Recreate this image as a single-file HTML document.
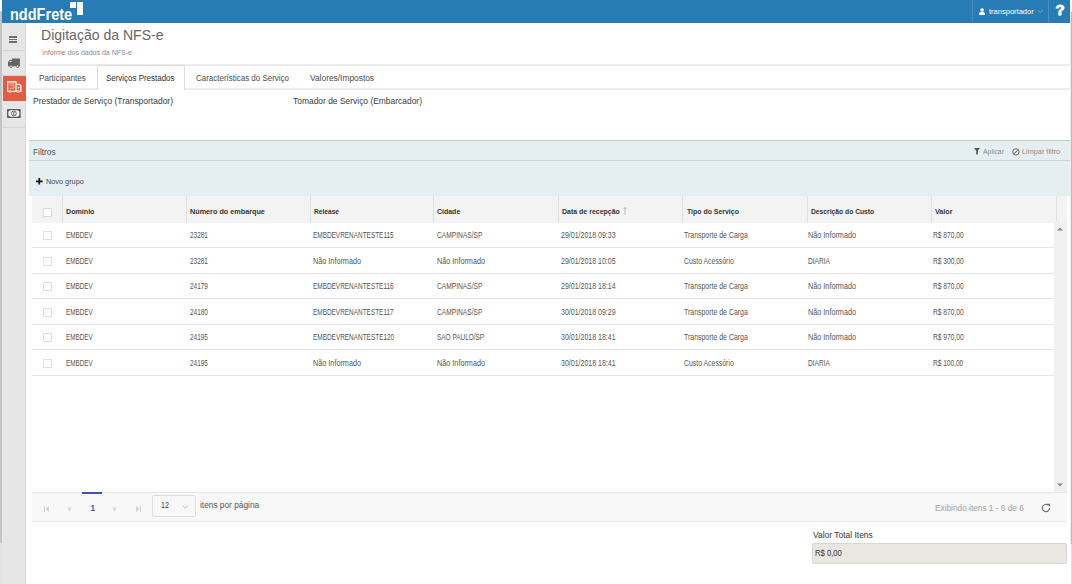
<!DOCTYPE html>
<html><head><meta charset="utf-8">
<style>
*{box-sizing:border-box;margin:0;padding:0}
html,body{width:1072px;height:584px;overflow:hidden;background:#fff;font-family:"Liberation Sans",sans-serif;color:#333}
.a{position:absolute}
.t{position:absolute;white-space:nowrap;line-height:1;transform-origin:0 0}
.sep{position:absolute;left:0;width:23px;height:1px;background:#d4d4d4}
</style></head><body>
<div class="a" style="left:0;top:0;width:2px;height:543px;background:#c4c4c4"></div>
<div class="a" style="left:0;top:543px;width:2px;height:41px;background:#e4e4e4"></div>
<div class="a" style="left:0;top:0;width:2px;height:11px;background:#fff"></div>
<div class="a" style="left:1071px;top:12px;width:1px;height:532px;background:#bdbdbd"></div>
<div class="a" style="left:1070px;top:12px;width:1px;height:532px;background:#ececec"></div>
<div class="a" style="left:1071px;top:544px;width:1px;height:40px;background:#e0e0e0"></div>
<div class="a" style="left:2px;top:0;width:1068px;height:23px;background:#287cb5"></div>
<div class="t" style="left:9.99px;top:7px;font-size:16px;color:#fff;font-weight:700;transform:scaleX(0.9075)">nddFrete</div>
<div class="a" style="left:70px;top:2px;width:6px;height:6px;background:#fff"></div>
<div class="a" style="left:76.5px;top:2px;width:6px;height:6px;background:#fff"></div>
<div class="a" style="left:76.5px;top:8.3px;width:6px;height:6.6px;background:#fff;border-top:0.6px solid #e3edf5"></div>
<div class="a" style="left:972px;top:0;width:1px;height:23px;background:#4a8fc2"></div>
<div class="a" style="left:1048px;top:0;width:1px;height:23px;background:#4a8fc2"></div>
<svg class="a" style="left:978.8px;top:8px" width="6.2" height="7" viewBox="0 0 6.2 7"><circle cx="3.1" cy="2" r="1.8" fill="#fff"/><path d="M0.2 7 V5.4 Q0.2 3.7 3.1 3.7 Q6 3.7 6 5.4 V7Z" fill="#fff"/></svg>
<div class="t" style="left:988.70px;top:8px;font-size:8.0px;color:#fff;transform:scaleX(0.9391)">transportador</div>
<svg class="a" style="left:1038px;top:10px" width="5" height="3" viewBox="0 0 5 3"><path d="M0.3 0.3 L2.5 2.5 L4.7 0.3" stroke="#9cc2de" stroke-width="0.7" fill="none"/></svg>
<div class="t" style="left:1055.50px;top:2px;font-size:15px;color:#fff;font-weight:700;-webkit-text-stroke:0.9px #fff">?</div>
<div class="a" style="left:2px;top:23px;width:24px;height:561px;background:#e6e6e6;border-right:1px solid #d9d9d9">
  <div class="a" style="left:7px;top:13px;width:8px;height:1.5px;background:#707070"></div>
  <div class="a" style="left:7px;top:15.8px;width:8px;height:1.3px;background:#707070"></div>
  <div class="a" style="left:7px;top:18.4px;width:8px;height:1.5px;background:#707070"></div>
  <div class="sep" style="top:27px"></div>
  <svg class="a" style="left:6px;top:35px" width="12" height="10" viewBox="0 0 12 10"><path d="M4 0.4 H11.9 V8.2 H0 V4 L2 1.8 H4Z" fill="#646464"/><path d="M1 4.1 L2.3 2.7 H3.6 V4.1Z" fill="#dfe6f0"/><circle cx="3" cy="8.3" r="1.2" fill="#e8eef5" stroke="#646464" stroke-width="0.9"/><circle cx="9.6" cy="8.3" r="1.2" fill="#e8eef5" stroke="#646464" stroke-width="0.9"/></svg>
  <div class="sep" style="top:52px"></div>
  <div class="a" style="left:1px;top:53px;width:23px;height:25px;background:#e35c40"></div>
  <svg class="a" style="left:5px;top:57.5px" width="15" height="12" viewBox="0 0 15 12"><path d="M0.7 0.8 H9 V10.4 H0.7Z" stroke="#fff" stroke-width="1.2" fill="none"/><path d="M9 3.3 H11.6 Q13.9 3.3 13.9 6 V10.4 H9" stroke="#fff" stroke-width="1.2" fill="none"/><path d="M2.6 4.2 H7 M2.6 7.2 H7 M7 4.2 V7.2" stroke="#f5d0c6" stroke-width="0.8" fill="none"/><path d="M2.4 2.6 H7" stroke="#f7c9bd" stroke-width="0.8"/><circle cx="11.6" cy="6.6" r="0.9" fill="#fff"/><circle cx="3.2" cy="10.6" r="1.1" fill="#e35c40" stroke="#fff" stroke-width="0.8"/><circle cx="11" cy="10.6" r="1.1" fill="#e35c40" stroke="#fff" stroke-width="0.8"/></svg>
  <svg class="a" style="left:5.3px;top:85.7px" width="14" height="9" viewBox="0 0 14 9"><rect x="0" y="0" width="13.7" height="9" rx="0.8" fill="#5e5e5e"/><rect x="1.3" y="1.3" width="11.1" height="6.4" rx="2.6" fill="#f2f4f6"/><circle cx="6.85" cy="4.5" r="2.4" fill="none" stroke="#555" stroke-width="0.9"/><path d="M6.85 3 V6" stroke="#555" stroke-width="0.9"/></svg>
  <div class="sep" style="top:104px"></div>
</div>
<div class="t" style="left:41.01px;top:28px;font-size:14.2px;color:#666;transform:scaleX(0.9893)">Digitação da NFS-e</div>
<div class="t" style="left:42.00px;top:49px;font-size:7.0px;color:#8a8a8a">Informe dos dados da NFS-e</div>
<div class="a" style="left:29px;top:64px;width:1041px;height:2px;background:#ececec"></div>
<div class="a" style="left:29px;top:88px;width:1041px;height:2px;background:#ececec"></div>
<div class="a" style="left:97px;top:65px;width:88px;height:25px;background:#fff;border:1px solid #dcdcdc;border-bottom:none;border-radius:2px 2px 0 0"></div>
<div class="t" style="left:39.30px;top:74px;font-size:8.3px;color:#4a4a4a;transform:scaleX(0.9767)">Participantes</div>
<div class="t" style="left:106.40px;top:74px;font-size:8.3px;color:#2e2e2e;transform:scaleX(0.9576)">Serviços Prestados</div>
<div class="t" style="left:195.80px;top:74px;font-size:8.3px;color:#4a4a4a;transform:scaleX(0.9607)">Características do Serviço</div>
<div class="t" style="left:310.30px;top:74px;font-size:8.3px;color:#4a4a4a;transform:scaleX(1.0089)">Valores/Impostos</div>
<div class="t" style="left:32.60px;top:97px;font-size:8.7px;color:#3a3a3a;transform:scaleX(0.9751)">Prestador de Serviço (Transportador)</div>
<div class="t" style="left:292.90px;top:97px;font-size:8.7px;color:#3a3a3a;transform:scaleX(0.9715)">Tomador de Serviço (Embarcador)</div>
<div class="a" style="left:29px;top:140px;width:1041px;height:56px;background:#e5eff2;border-top:1px solid #c2c8ca"></div>
<div class="a" style="left:29px;top:160px;width:1041px;height:1px;background:#c9d3d6"></div>
<div class="t" style="left:32.60px;top:148px;font-size:8.6px;color:#505050;transform:scaleX(0.9655)">Filtros</div>
<svg class="a" style="left:973.5px;top:148.3px" width="6" height="7" viewBox="0 0 6 7"><path d="M0 0 H6 L3.8 2.8 V6.5 H2.2 V2.8Z" fill="#555"/></svg>
<div class="t" style="left:982.50px;top:148px;font-size:7.6px;color:#8a8a8a;transform:scaleX(0.9036)">Aplicar</div>
<svg class="a" style="left:1012px;top:147.8px" width="8" height="8" viewBox="0 0 8 8"><circle cx="3.9" cy="3.9" r="3.2" stroke="#666" stroke-width="1" fill="none"/><path d="M1.8 6 L6 1.8" stroke="#666" stroke-width="1"/></svg>
<div class="t" style="left:1022.00px;top:148px;font-size:7.8px;color:#8a8a8a;transform:scaleX(0.9374)">Limpar filtro</div>
<svg class="a" style="left:36.4px;top:178.3px" width="7" height="7" viewBox="0 0 7 7"><path d="M3.3 0 V6.6 M0 3.3 H6.6" stroke="#111" stroke-width="1.7"/></svg>
<div class="t" style="left:46.00px;top:178px;font-size:8.0px;color:#444;transform:scaleX(0.9139)">Novo grupo</div>
<div class="a" style="left:32px;top:196px;width:1035px;height:27px;background:#f3f3f3"></div>
<div class="a" style="left:62px;top:196px;width:1px;height:27px;background:#e0e0e0"></div>
<div class="a" style="left:186px;top:196px;width:1px;height:27px;background:#e0e0e0"></div>
<div class="a" style="left:310px;top:196px;width:1px;height:27px;background:#e0e0e0"></div>
<div class="a" style="left:433px;top:196px;width:1px;height:27px;background:#e0e0e0"></div>
<div class="a" style="left:558px;top:196px;width:1px;height:27px;background:#e0e0e0"></div>
<div class="a" style="left:682px;top:196px;width:1px;height:27px;background:#e0e0e0"></div>
<div class="a" style="left:807px;top:196px;width:1px;height:27px;background:#e0e0e0"></div>
<div class="a" style="left:931px;top:196px;width:1px;height:27px;background:#e0e0e0"></div>
<div class="a" style="left:1056px;top:196px;width:1px;height:27px;background:#e0e0e0"></div>
<div class="a" style="left:43px;top:208px;width:9px;height:9px;background:#fff;border:1px solid #d8d8d8"></div>
<div class="t" style="left:66.30px;top:208px;font-size:7.3px;color:#333;font-weight:700;transform:scaleX(0.9756)">Domínio</div>
<div class="t" style="left:189.70px;top:208px;font-size:7.3px;color:#333;font-weight:700;transform:scaleX(0.9926)">Número do embarque</div>
<div class="t" style="left:313.90px;top:208px;font-size:7.3px;color:#333;font-weight:700;transform:scaleX(0.9081)">Release</div>
<div class="t" style="left:437.30px;top:208px;font-size:7.3px;color:#333;font-weight:700;transform:scaleX(0.9559)">Cidade</div>
<div class="t" style="left:562.10px;top:208px;font-size:7.3px;color:#333;font-weight:700;transform:scaleX(0.9578)">Data de recepção</div>
<div class="t" style="left:686.50px;top:208px;font-size:7.3px;color:#333;font-weight:700;transform:scaleX(0.9502)">Tipo do Serviço</div>
<div class="t" style="left:811.30px;top:208px;font-size:7.3px;color:#333;font-weight:700;transform:scaleX(0.9223)">Descrição do Custo</div>
<div class="t" style="left:935.30px;top:208px;font-size:7.3px;color:#333;font-weight:700;transform:scaleX(0.9774)">Valor</div>
<svg class="a" style="left:623px;top:207px" width="4" height="8" viewBox="0 0 4 8"><path d="M2 0.5 V8 M0.6 2 L2 0.5 L3.4 2" stroke="#aaa" stroke-width="0.8" fill="none"/></svg>
<div class="a" style="left:32px;top:247px;width:1022px;height:1px;background:#e3e3e3"></div>
<div class="a" style="left:43px;top:231.0px;width:9px;height:9px;background:#fff;border:1px solid #dedede"></div>
<div class="t" style="left:65.50px;top:232px;font-size:8.2px;color:#555;transform:scaleX(0.7746)">EMBDEV</div>
<div class="t" style="left:189.70px;top:232px;font-size:8.2px;color:#555;transform:scaleX(0.7883)">23281</div>
<div class="t" style="left:313.10px;top:232px;font-size:8.2px;color:#555;transform:scaleX(0.7855)">EMBDEVRENANTESTE115</div>
<div class="t" style="left:436.80px;top:232px;font-size:8.2px;color:#555;transform:scaleX(0.8106)">CAMPINAS/SP</div>
<div class="t" style="left:560.60px;top:232px;font-size:8.2px;color:#555;transform:scaleX(0.8569)">29/01/2018 09:33</div>
<div class="t" style="left:684.20px;top:232px;font-size:8.2px;color:#555;transform:scaleX(0.8482)">Transporte de Carga</div>
<div class="t" style="left:808.00px;top:232px;font-size:8.2px;color:#555;transform:scaleX(0.8864)">Não Informado</div>
<div class="t" style="left:932.90px;top:232px;font-size:8.2px;color:#555;transform:scaleX(0.8109)">R$ 870,00</div>
<div class="a" style="left:32px;top:273px;width:1022px;height:1px;background:#e3e3e3"></div>
<div class="a" style="left:43px;top:256.6px;width:9px;height:9px;background:#fff;border:1px solid #dedede"></div>
<div class="t" style="left:65.50px;top:258px;font-size:8.2px;color:#555;transform:scaleX(0.7746)">EMBDEV</div>
<div class="t" style="left:189.70px;top:258px;font-size:8.2px;color:#555;transform:scaleX(0.7883)">23281</div>
<div class="t" style="left:313.10px;top:258px;font-size:8.2px;color:#555;transform:scaleX(0.8864)">Não Informado</div>
<div class="t" style="left:436.80px;top:258px;font-size:8.2px;color:#555;transform:scaleX(0.8864)">Não Informado</div>
<div class="t" style="left:560.60px;top:258px;font-size:8.2px;color:#555;transform:scaleX(0.8569)">29/01/2018 10:05</div>
<div class="t" style="left:684.20px;top:258px;font-size:8.2px;color:#555;transform:scaleX(0.8409)">Custo Acessório</div>
<div class="t" style="left:808.00px;top:258px;font-size:8.2px;color:#555;transform:scaleX(0.8047)">DIARIA</div>
<div class="t" style="left:932.90px;top:258px;font-size:8.2px;color:#555;transform:scaleX(0.8109)">R$ 300,00</div>
<div class="a" style="left:32px;top:298px;width:1022px;height:1px;background:#e3e3e3"></div>
<div class="a" style="left:43px;top:282.2px;width:9px;height:9px;background:#fff;border:1px solid #dedede"></div>
<div class="t" style="left:65.50px;top:283px;font-size:8.2px;color:#555;transform:scaleX(0.7746)">EMBDEV</div>
<div class="t" style="left:189.70px;top:283px;font-size:8.2px;color:#555;transform:scaleX(0.7883)">24179</div>
<div class="t" style="left:313.10px;top:283px;font-size:8.2px;color:#555;transform:scaleX(0.7855)">EMBDEVRENANTESTE116</div>
<div class="t" style="left:436.80px;top:283px;font-size:8.2px;color:#555;transform:scaleX(0.8106)">CAMPINAS/SP</div>
<div class="t" style="left:560.60px;top:283px;font-size:8.2px;color:#555;transform:scaleX(0.8569)">29/01/2018 18:14</div>
<div class="t" style="left:684.20px;top:283px;font-size:8.2px;color:#555;transform:scaleX(0.8482)">Transporte de Carga</div>
<div class="t" style="left:808.00px;top:283px;font-size:8.2px;color:#555;transform:scaleX(0.8864)">Não Informado</div>
<div class="t" style="left:932.90px;top:283px;font-size:8.2px;color:#555;transform:scaleX(0.8109)">R$ 870,00</div>
<div class="a" style="left:32px;top:324px;width:1022px;height:1px;background:#e3e3e3"></div>
<div class="a" style="left:43px;top:307.8px;width:9px;height:9px;background:#fff;border:1px solid #dedede"></div>
<div class="t" style="left:65.50px;top:309px;font-size:8.2px;color:#555;transform:scaleX(0.7746)">EMBDEV</div>
<div class="t" style="left:189.70px;top:309px;font-size:8.2px;color:#555;transform:scaleX(0.7883)">24180</div>
<div class="t" style="left:313.10px;top:309px;font-size:8.2px;color:#555;transform:scaleX(0.7855)">EMBDEVRENANTESTE117</div>
<div class="t" style="left:436.80px;top:309px;font-size:8.2px;color:#555;transform:scaleX(0.8106)">CAMPINAS/SP</div>
<div class="t" style="left:560.60px;top:309px;font-size:8.2px;color:#555;transform:scaleX(0.8569)">30/01/2018 09:29</div>
<div class="t" style="left:684.20px;top:309px;font-size:8.2px;color:#555;transform:scaleX(0.8482)">Transporte de Carga</div>
<div class="t" style="left:808.00px;top:309px;font-size:8.2px;color:#555;transform:scaleX(0.8864)">Não Informado</div>
<div class="t" style="left:932.90px;top:309px;font-size:8.2px;color:#555;transform:scaleX(0.8109)">R$ 870,00</div>
<div class="a" style="left:32px;top:349px;width:1022px;height:1px;background:#e3e3e3"></div>
<div class="a" style="left:43px;top:333.4px;width:9px;height:9px;background:#fff;border:1px solid #dedede"></div>
<div class="t" style="left:65.50px;top:334px;font-size:8.2px;color:#555;transform:scaleX(0.7746)">EMBDEV</div>
<div class="t" style="left:189.70px;top:334px;font-size:8.2px;color:#555;transform:scaleX(0.7883)">24195</div>
<div class="t" style="left:313.10px;top:334px;font-size:8.2px;color:#555;transform:scaleX(0.7857)">EMBDEVRENANTESTE120</div>
<div class="t" style="left:436.80px;top:334px;font-size:8.2px;color:#555;transform:scaleX(0.7874)">SAO PAULO/SP</div>
<div class="t" style="left:560.60px;top:334px;font-size:8.2px;color:#555;transform:scaleX(0.8569)">30/01/2018 18:41</div>
<div class="t" style="left:684.20px;top:334px;font-size:8.2px;color:#555;transform:scaleX(0.8482)">Transporte de Carga</div>
<div class="t" style="left:808.00px;top:334px;font-size:8.2px;color:#555;transform:scaleX(0.8864)">Não Informado</div>
<div class="t" style="left:932.90px;top:334px;font-size:8.2px;color:#555;transform:scaleX(0.8109)">R$ 970,00</div>
<div class="a" style="left:32px;top:375px;width:1022px;height:1px;background:#e3e3e3"></div>
<div class="a" style="left:43px;top:359.0px;width:9px;height:9px;background:#fff;border:1px solid #dedede"></div>
<div class="t" style="left:65.50px;top:360px;font-size:8.2px;color:#555;transform:scaleX(0.7746)">EMBDEV</div>
<div class="t" style="left:189.70px;top:360px;font-size:8.2px;color:#555;transform:scaleX(0.7883)">24195</div>
<div class="t" style="left:313.10px;top:360px;font-size:8.2px;color:#555;transform:scaleX(0.8864)">Não Informado</div>
<div class="t" style="left:436.80px;top:360px;font-size:8.2px;color:#555;transform:scaleX(0.8864)">Não Informado</div>
<div class="t" style="left:560.60px;top:360px;font-size:8.2px;color:#555;transform:scaleX(0.8569)">30/01/2018 18:41</div>
<div class="t" style="left:684.20px;top:360px;font-size:8.2px;color:#555;transform:scaleX(0.8409)">Custo Acessório</div>
<div class="t" style="left:808.00px;top:360px;font-size:8.2px;color:#555;transform:scaleX(0.8047)">DIARIA</div>
<div class="t" style="left:932.90px;top:360px;font-size:8.2px;color:#555;transform:scaleX(0.7978)">R$ 100,00</div>
<div class="a" style="left:1054px;top:222px;width:12.5px;height:270px;background:#f0f0f0"></div>
<svg class="a" style="left:1057px;top:227px" width="6" height="4" viewBox="0 0 6 4"><path d="M0 3.5 L3 0.5 L6 3.5Z" fill="#888"/></svg>
<svg class="a" style="left:1057px;top:483px" width="6" height="4" viewBox="0 0 6 4"><path d="M0 0.5 L3 3.5 L6 0.5Z" fill="#888"/></svg>
<div class="a" style="left:32px;top:492px;width:1035px;height:30px;background:#f8f8f8;border-top:1px solid #e6e6e6;border-bottom:1px solid #e6e6e6"></div>
<div class="a" style="left:82px;top:492px;width:20px;height:2px;background:#3f51b5"></div>
<svg class="a" style="left:43.5px;top:505.8px" width="5" height="6" viewBox="0 0 5 6"><path d="M0.5 0 V6" stroke="#d2d2d2" stroke-width="1"/><path d="M5 0 V6 L1.5 3Z" fill="#d2d2d2"/></svg>
<svg class="a" style="left:66.7px;top:505.8px" width="4" height="6" viewBox="0 0 4 6"><path d="M3.5 0 V6 L0.5 3Z" fill="#d2d2d2"/></svg>
<div class="t" style="left:90.40px;top:505px;font-size:8.2px;color:#3f51b5;font-weight:700">1</div>
<svg class="a" style="left:113px;top:505.8px" width="4" height="6" viewBox="0 0 4 6"><path d="M0.5 0 V6 L3.5 3Z" fill="#d2d2d2"/></svg>
<svg class="a" style="left:136px;top:505.8px" width="5" height="6" viewBox="0 0 5 6"><path d="M4.5 0 V6" stroke="#d2d2d2" stroke-width="1"/><path d="M0 0 V6 L3.5 3Z" fill="#d2d2d2"/></svg>
<div class="a" style="left:152px;top:495px;width:44px;height:21.5px;background:#f8f8f8;border:1px solid #ddd;border-radius:2px"></div>
<div class="t" style="left:161.00px;top:502px;font-size:8.2px;color:#444;transform:scaleX(0.8688)">12</div>
<svg class="a" style="left:182px;top:505.4px" width="7" height="4" viewBox="0 0 7 4"><path d="M0.4 0.4 L3.2 3.3 L6.1 0.4" stroke="#bbb" stroke-width="0.9" fill="none"/></svg>
<div class="t" style="left:199.80px;top:501px;font-size:8.5px;color:#555;transform:scaleX(0.9776)">itens por página</div>
<div class="t" style="left:934.80px;top:504px;font-size:8.5px;color:#a0a0a0;transform:scaleX(0.9741)">Exibindo itens 1 - 6 de 6</div>
<svg class="a" style="left:1040.5px;top:503px" width="10" height="10" viewBox="0 0 10 10"><path d="M8.6 5 A3.6 3.6 0 1 1 7.3 2.2" stroke="#707070" stroke-width="1.1" fill="none"/><path d="M5.8 0.8 L9.1 0.8 L9.1 4.1Z" fill="#707070"/></svg>
<div class="t" style="left:813.10px;top:531px;font-size:9.0px;color:#333;transform:scaleX(0.9384)">Valor Total Itens</div>
<div class="a" style="left:812px;top:542.5px;width:255px;height:21px;background:#e8e7e1;border:1px solid #d6d6d0;border-radius:2px"></div>
<div class="t" style="left:814.90px;top:550px;font-size:8.2px;color:#333;transform:scaleX(0.9374)">R$ 0,00</div>
</body></html>
